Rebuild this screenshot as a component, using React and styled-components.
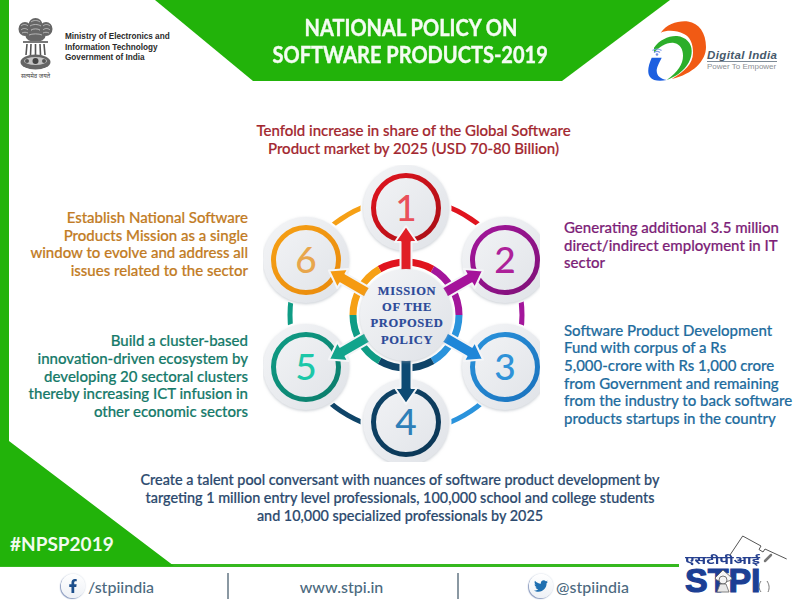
import React from 'react';
import styled, {createGlobalStyle} from 'styled-components';
import {FaFacebookF, FaTwitter} from 'react-icons/fa';

const green = '#22b30a';
const bodyFont = `"Lato", "Open Sans", "Liberation Sans", sans-serif`;

const Global = createGlobalStyle`
  html, body {
    margin: 0;
    background: #fff;
  }
`;

const Poster = styled.div`
  position: relative;
  width: 800px;
  height: 605px;
  overflow: hidden;
  background: #fff;
  font-family: ${bodyFont};
`;

const Main = styled.div`
  position: relative;
  height: 564px;
  border-bottom: 3px solid #35b81f;
  display: flex;
  flex-direction: column;
`;

const Wedge = styled.div`
  position: absolute;
  left: 0;
  top: 0;
  width: 174px;
  height: 566px;
  background: ${green};
  clip-path: polygon(0 0, 9px 0, 9px 441px, 174px 566px, 0 566px);
  display: flex;
  align-items: flex-end;
  padding: 0 0 9px 10px;
  box-sizing: border-box;
`;

const Tag = styled.div`
  color: #f2fbef;
  font-size: 19px;
  font-weight: 700;
  line-height: 26px;
`;

const Header = styled.header`
  position: relative;
  display: flex;
  height: 81px;
  flex: none;
`;

const Ministry = styled.div`
  width: 155px;
  flex: none;
  display: flex;
  gap: 12px;
  padding: 18px 0 0 18px;
  box-sizing: border-box;
  white-space: nowrap;
  position: relative;
  z-index: 2;
`;

const EmblemWrap = styled.div`
  display: flex;
  flex-direction: column;
  align-items: center;
  width: 35px;
  flex: none;
`;

const Motto = styled.div`
  margin-top: 2px;
  font-family: "Noto Sans", "DejaVu Sans", sans-serif;
  font-size: 6px;
  line-height: 8px;
  color: #444;
`;

const MinistryText = styled.div`
  margin-top: 14px;
  font-family: "Liberation Sans", sans-serif;
  font-size: 8.2px;
  line-height: 10.6px;
  color: #2a2a2a;
  font-weight: 700;
`;

const Banner = styled.div`
  width: 515px;
  flex: none;
  background: ${green};
  clip-path: polygon(0 0, 515px 0, 407px 81px, 98px 81px);
  color: #f4fcf2;
  display: flex;
  flex-direction: column;
  align-items: center;
  padding: 14px 4px 0 0;
  box-sizing: border-box;
  font-size: 22px;
  font-weight: 700;
  line-height: 27px;
  text-align: center;
`;

const TitleLine = styled.div`
  transform: scaleX(.91);
  white-space: nowrap;
  -webkit-text-stroke: .4px #f4fcf2;
`;

const DigitalIndia = styled.div`
  width: 130px;
  margin-left: -22px;
  flex: none;
  display: flex;
  position: relative;
  padding-top: 20px;
  box-sizing: border-box;
`;

const DigitalCopy = styled.div`
  position: absolute;
  left: 59px;
  top: 49px;
  white-space: nowrap;
`;

const DigitalName = styled.div`
  font-family: "Liberation Sans", sans-serif;
  font-style: italic;
  font-weight: 700;
  font-size: 11.5px;
  line-height: 12px;
  letter-spacing: .4px;
  color: #46586a;
  border-bottom: 1px solid #7d8a96;
`;

const DigitalLine = styled.div`
  font-family: "Liberation Sans", sans-serif;
  font-size: 8px;
  line-height: 10px;
  color: #8b8f94;
`;

const Goal = styled.div`
  color: ${props => props.color};
  font-size: ${props => props.size || 15}px;
  line-height: ${props => props.leading || 17.6}px;
  font-weight: 500;
  -webkit-text-stroke: .2px ${props => props.color};
  text-align: ${props => props.align || 'left'};
  white-space: nowrap;
`;

const TopGoal = styled(Goal)`
  margin-top: 41px;
  height: 43px;
  padding-left: 27px;
`;

const Middle = styled.div`
  display: grid;
  grid-template-columns: 248px 277px 1fr;
  column-gap: 15px;
  height: 297px;
  flex: none;
  position: relative;
  z-index: 1;
`;

const Side = styled.div`
  display: flex;
  flex-direction: column;
  gap: ${props => props.gap}px;
  padding-top: ${props => props.top}px;
`;

const RightSide = styled(Side)`
  margin-left: 9px;
`;

const Diagram = styled.div`
  position: relative;
  width: 277px;
  height: 297px;
`;

const Hub = styled.div`
  position: absolute;
  left: 144px;
  top: 150px;
  transform: translate(-50%, -50%);
  font-family: "Liberation Serif", serif;
  font-weight: 700;
  font-size: 12.5px;
  line-height: 16.2px;
  letter-spacing: .6px;
  color: #2c4a99;
  -webkit-text-stroke: .2px #2c4a99;
  text-align: center;
  white-space: nowrap;
`;

const BottomGoal = styled(Goal)`
  position: relative;
  z-index: 1;
  margin-top: 9px;
`;

const Footer = styled.footer`
  display: grid;
  grid-template-columns: 227px 230px 242px;
  height: 38px;
  align-items: center;
`;

const Cell = styled.div`
  display: flex;
  align-items: center;
  justify-content: center;
  gap: 3px;
  height: 26px;
  padding-right: ${props => props.inset || 0}px;
  color: #4c6a80;
  font-size: 16px;
  font-weight: 500;
  border-left: ${props => props.divided ? '2px solid #8a98a2' : 'none'};
`;

const SocialDot = styled.span`
  width: 24px;
  height: 24px;
  border-radius: 50%;
  flex: none;
  display: flex;
  align-items: center;
  justify-content: center;
  background: linear-gradient(#fff, #eef1f6);
  box-shadow: -1px 1px 1px #8d9dc0, 0 0 2px #c6cfdc;
  color: ${props => props.color};
  font-size: 14px;
`;

const Stpi = styled.div`
  position: absolute;
  left: 679px;
  top: 534px;
  width: 121px;
  height: 64px;
  z-index: 2;
  background: #fff;
`;

const StpiHindi = styled.div`
  position: absolute;
  left: 6px;
  top: 21px;
  font-family: "Noto Sans", "DejaVu Sans", sans-serif;
  font-size: 10.5px;
  line-height: 11px;
  font-weight: 700;
  color: #26408f;
  white-space: nowrap;
  transform: scaleX(1.5);
  transform-origin: left center;
`;

const StpiName = styled.div`
  position: absolute;
  left: 6px;
  top: 33px;
  font-family: "Liberation Sans", sans-serif;
  font-size: 34px;
  line-height: 26px;
  font-weight: 700;
  color: #1c3f94;
  -webkit-text-stroke: 1.2px #1c3f94;
`;

const StpiArt = styled.svg`
  position: absolute;
  left: 0;
  top: 0;
`;

const nodes = [
  {n: 1, x: 406, y: 208, a: -90, ring: '#e0141e', dark: '#a90f16', digit: '#e9505a', arrow: '#e01e26'},
  {n: 2, x: 505, y: 260, a: -30, ring: '#a3169b', dark: '#7f1078', digit: '#ad2199', arrow: '#a5129a'},
  {n: 3, x: 505, y: 367, a: 30, ring: '#2a93dc', dark: '#1a72bd', digit: '#2f92d8', arrow: '#1f86d8'},
  {n: 4, x: 406, y: 422, a: 90, ring: '#0f4468', dark: '#0b3655', digit: '#2f7fb8', arrow: '#0d4a73'},
  {n: 5, x: 306, y: 367, a: 150, ring: '#0f9c85', dark: '#0b7c6b', digit: '#1cc7a8', arrow: '#12a48c'},
  {n: 6, x: 306, y: 260, a: 210, ring: '#f6a015', dark: '#e98a0c', digit: '#e8a64c', arrow: '#f59a12'},
];

const cx = 406;
const cy = 315;

const arc = (r, from, to) => {
  const p = d => [cx + r * Math.cos(d * Math.PI / 180), cy + r * Math.sin(d * Math.PI / 180)];
  const [x1, y1] = p(from);
  const [x2, y2] = p(to);
  return `M${x1} ${y1}A${r} ${r} 0 0 1 ${x2} ${y2}`;
};

function Emblem() {
  return (
    <svg width="35" height="52" viewBox="0 0 35 52">
      <g fill="#666">
        <ellipse cx="7" cy="11" rx="6.500" ry="7"/>
        <ellipse cx="28" cy="11" rx="6.500" ry="7"/>
        <ellipse cx="17.500" cy="7" rx="7" ry="7"/>
        <ellipse cx="17.500" cy="18" rx="10" ry="6"/>
      </g>
      <g fill="none" stroke="#d6d6d6" strokeWidth=".7">
        <path d="M3 8C5 6 8 6 10 8M3 12C5 10 8 10 10 12M4 15C6 14 8 14 10 15"/>
        <path d="M25 8C27 6 30 6 32 8M25 12C27 10 30 10 32 12M25 15C27 14 29 14 31 15"/>
        <path d="M13 4C15 2 20 2 22 4M12 8C15 6 20 6 23 8M13 12C15 10.500 20 10.500 22 12M11 17C14 15.500 21 15.500 24 17"/>
      </g>
      <rect x="5" y="23" width="25" height="2" fill="#777"/>
      <path d="M9 26L8 37M13 26L12.500 37M17.500 26V37M22 26L22.500 37M26 26L27 37" stroke="#555" strokeWidth="1.600"/>
      <ellipse cx="17.500" cy="44" rx="15" ry="7.500" fill="#666"/>
      <ellipse cx="17.500" cy="43" rx="11.500" ry="4" fill="#c4c4c4"/>
      <circle cx="17.500" cy="43" r="3" fill="#444"/>
      <circle cx="9" cy="43" r="2" fill="#555"/>
      <circle cx="26" cy="43" r="2" fill="#555"/>
    </svg>
  );
}

function IndiaMark() {
  return (
    <svg width="62" height="62" viewBox="648 19 62 62">
      <path d="M660.700 31.700C667 23 678 19.500 688 20.500C699 22 706 32 706 46C706 60 693 73 671.700 78C684 71 693 63 693 52C693 42 690 36 684 33C676 29 667 29 660.700 31.700Z" fill="#f15a14"/>
      <path d="M654 46.700C659 39 669 34.500 677 35C686 36 691.700 42 691.700 50C691.700 63 681 74 666.700 79C678 71 683 63 683 55C683 48 680 43 674 42C667 41 659 46 654 52Z" fill="#2cae2a"/>
      <path d="M651.700 56.700H661.700C659 62 656.500 67 656.700 70C657 75 660 77.500 666.700 79C660 80.500 653 80 650 76C647 72 648 65 651.700 56.700Z" fill="#1c5fe0"/>
      <path d="M652.500 49.500C655 47.500 659 47.500 661.500 49.500M654 51.500C656 50 658 50 660 51.500" fill="none" stroke="#7f9be8" strokeWidth="1.200"/>
      <circle cx="657" cy="53.500" r="1.300" fill="#6f8fe6"/>
    </svg>
  );
}

function Wheel() {
  return (
    <svg width="277" height="297" viewBox="263 165 277 297">
      <defs>
        <filter id="lift" x="-20%" y="-20%" width="140%" height="140%">
          <feDropShadow dx="0" dy="1" stdDeviation="1.500" floodColor="#9aa3ad" floodOpacity=".55"/>
        </filter>
        <linearGradient id="disc" x1="0" y1="0" x2="1" y2="1">
          <stop offset="0" stopColor="#f4f5f7"/>
          <stop offset="1" stopColor="#dfe2e7"/>
        </linearGradient>
        {nodes.map(n => (
          <linearGradient key={n.n} id={`ring${n.n}`} x1="0" y1="0" x2="1" y2="1">
            <stop offset="0" stopColor={n.ring}/>
            <stop offset="1" stopColor={n.dark}/>
          </linearGradient>
        ))}
      </defs>
      {nodes.map(n => (
        <path key={n.n} d={arc(116, n.a, n.a + 60)} fill="none" stroke={n.ring} strokeWidth="5"/>
      ))}
      {nodes.map(n => (
        <path key={n.n} d={arc(53, n.a - 30, n.a + 30)} fill="none" stroke={n.ring} strokeWidth="7"/>
      ))}
      {nodes.map(n => (
        <g key={n.n}>
          <circle cx={n.x} cy={n.y} r="45.500" fill="#fff"/>
          <circle cx={n.x} cy={n.y} r="43" fill="url(#disc)" filter="url(#lift)"/>
          <circle cx={n.x} cy={n.y} r="32.500" fill="none" stroke={`url(#ring${n.n})`} strokeWidth="5"/>
          <text x={n.x} y={n.y + 13} textAnchor="middle" fontFamily="Lato, sans-serif" fontWeight="500" fontSize="37" fill={n.digit}>{n.n}</text>
        </g>
      ))}
      {nodes.map(n => (
        <polygon
          key={n.n}
          transform={`translate(${cx} ${cy}) rotate(${n.a})`}
          points="30,-5.500 73,-5.500 73,-11 89,0 73,11 73,5.500 30,5.500"
          fill={n.arrow}
          stroke="#f4f5f7"
          strokeWidth="2"
          strokeLinejoin="round"
        />
      ))}
      <circle cx={cx} cy={cy} r="46" fill="url(#disc)" filter="url(#lift)"/>
    </svg>
  );
}

function StpiMark() {
  return (
    <StpiArt width="121" height="64" viewBox="-5 0 121 64">
      <path d="M46 21L58.700 2L77 12L75 15.500L79 18L81 15L102.700 25" fill="none" stroke="#555" strokeWidth="1"/>
      <path d="M81 27L87 21" stroke="#777" strokeWidth="2.500" strokeLinecap="round"/>
      <path d="M39 36L31 44C33 49 47 49 48 44Z" fill="#f6f6f6" stroke="#555" strokeWidth=".8"/>
      <circle cx="39" cy="46" r="4" fill="#f4f4f4" stroke="#555" strokeWidth=".8"/>
      <path d="M36 50L33 58H45L42 50Z" fill="#e8e8e8" stroke="#666" strokeWidth=".8"/>
      <path d="M77 58C74 54 75 50 77 47M84 58C86 54 85 50 83 47" fill="none" stroke="#555" strokeWidth=".8"/>
    </StpiArt>
  );
}

export default function App() {
  return (
    <Poster>
      <Global/>
      <Main>
        <Wedge>
          <Tag>#NPSP2019</Tag>
        </Wedge>
        <Header>
          <Ministry>
            <EmblemWrap>
              <Emblem/>
              <Motto>सत्यमेव जयते</Motto>
            </EmblemWrap>
            <MinistryText>
              Ministry of Electronics and<br/>
              Information Technology<br/>
              Government of India
            </MinistryText>
          </Ministry>
          <Banner>
            <TitleLine>NATIONAL POLICY ON</TitleLine>
            <TitleLine>SOFTWARE PRODUCTS-2019</TitleLine>
          </Banner>
          <DigitalIndia>
            <IndiaMark/>
            <DigitalCopy>
              <DigitalName>Digital India</DigitalName>
              <DigitalLine>Power To Empower</DigitalLine>
            </DigitalCopy>
          </DigitalIndia>
        </Header>
        <TopGoal color="#a3272f" align="center">
          Tenfold increase in share of the Global Software<br/>
          Product market by 2025 (USD 70-80 Billion)
        </TopGoal>
        <Middle>
          <Side top={44} gap={53}>
            <Goal color="#c27c25" align="right">
              Establish National Software<br/>
              Products Mission as a single<br/>
              window to evolve and address all<br/>
              issues related to the sector
            </Goal>
            <Goal color="#167a6a" align="right">
              Build a cluster-based<br/>
              innovation-driven ecosystem by<br/>
              developing 20 sectoral clusters<br/>
              thereby increasing ICT infusion in<br/>
              other economic sectors
            </Goal>
          </Side>
          <Diagram>
            <Wheel/>
            <Hub>MISSION<br/>OF THE<br/>PROPOSED<br/>POLICY</Hub>
          </Diagram>
          <RightSide top={54} gap={50}>
            <Goal color="#7d1f78">
              Generating additional 3.5 million<br/>
              direct/indirect employment in IT<br/>
              sector
            </Goal>
            <Goal color="#1f6d9e">
              Software Product Development<br/>
              Fund with corpus of a Rs<br/>
              5,000-crore with Rs 1,000 crore<br/>
              from Government and remaining<br/>
              from the industry to back software<br/>
              products startups in the country
            </Goal>
          </RightSide>
        </Middle>
        <BottomGoal color="#2c4a6e" align="center" size={14.4} leading={18}>
          Create a talent pool conversant with nuances of software product development by<br/>
          targeting 1 million entry level professionals, 100,000 school and college students<br/>
          and 10,000 specialized professionals by 2025
        </BottomGoal>
      </Main>
      <Footer>
        <Cell inset={12}>
          <SocialDot color="#1d4f8c"><FaFacebookF/></SocialDot>
          /stpiindia
        </Cell>
        <Cell divided inset={3}>www.stpi.in</Cell>
        <Cell divided>
          <SocialDot color="#1f6fb0"><FaTwitter/></SocialDot>
          @stpiindia
        </Cell>
      </Footer>
      <Stpi>
        <StpiHindi>एसटीपीआई</StpiHindi>
        <StpiName>STPI</StpiName>
        <StpiMark/>
      </Stpi>
    </Poster>
  );
}
